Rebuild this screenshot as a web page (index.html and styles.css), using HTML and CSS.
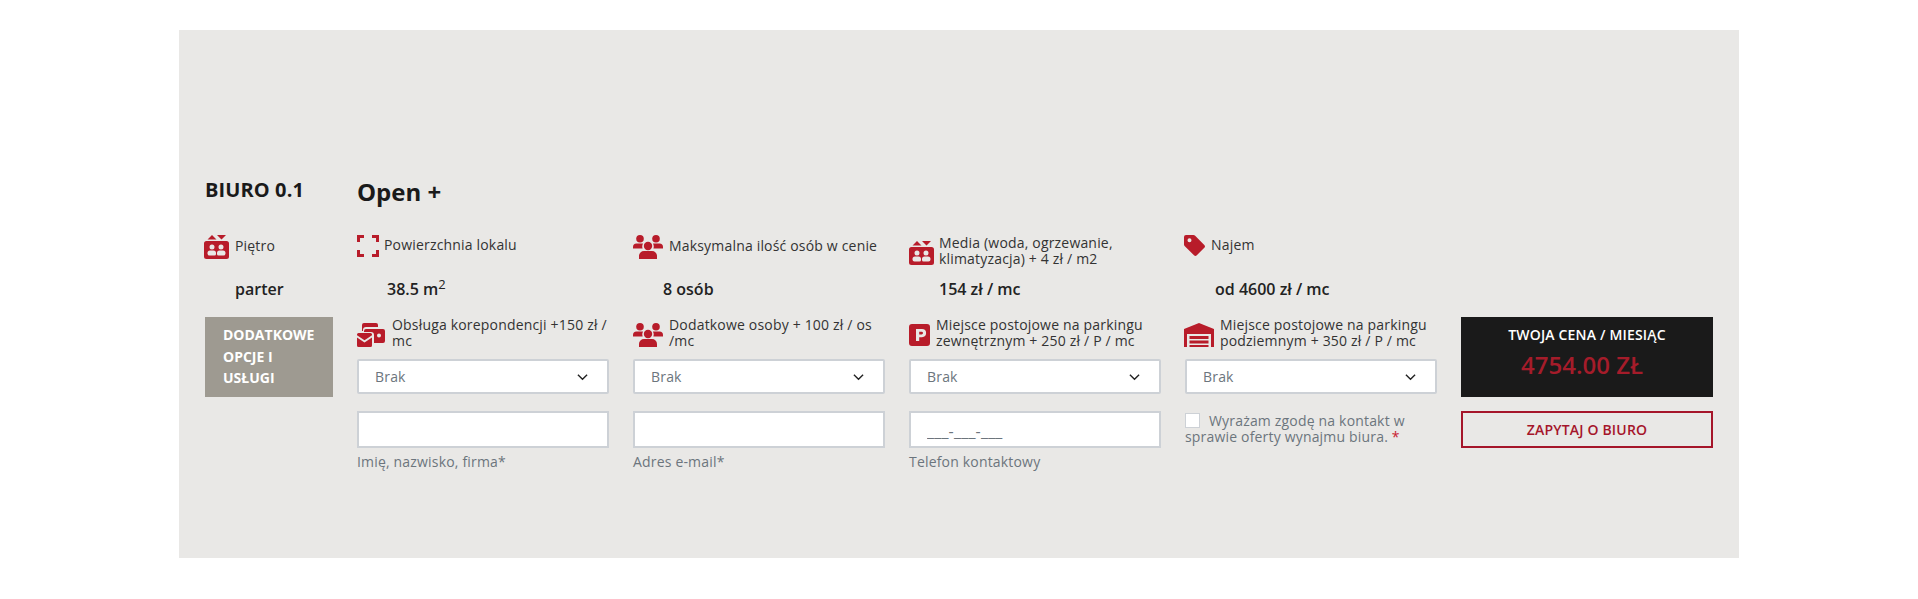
FILE: index.html
```html
<!DOCTYPE html>
<html lang="pl">
<head>
<meta charset="utf-8">
<title>Biuro 0.1</title>
<link rel="stylesheet" href="styles.css">
</head>
<body>
<section class="panel">
  <div class="row row-title">
    <h2 class="office">BIURO 0.1</h2>
    <h1 class="plan">Open +</h1>
  </div>
  <div class="row row-info">
    <div class="head"><svg class="ic w25" viewBox="0 0 25 24"><use href="#lift"/></svg><span class="one t-left">Piętro</span></div>
    <div class="head"><svg class="ic w22" viewBox="0 0 22 22"><path d="M0 0h7v3H3v4H0zM15 0h7v7h-3V3h-4zM0 15h3v4h4v3H0zM19 15h3v7h-7v-3h4z"/></svg><span class="one t-exp">Powierzchnia lokalu</span></div>
    <div class="head"><svg class="ic w30" viewBox="0 0 30 24"><use href="#people"/></svg><span class="one t-ppl">Maksymalna ilość osób w cenie</span></div>
    <div class="head"><svg class="ic w25" viewBox="0 0 25 24"><use href="#lift"/></svg><span class="t-media">Media (woda, ogrzewanie, klimatyzacja) + 4 zł / m2</span></div>
    <div class="head"><svg class="ic w21" viewBox="0 0 21 21"><path d="M2 0h7.500a2 2 0 0 1 1.400.6l9.400 9.400a2 2 0 0 1 0 2.800l-7.500 7.500a2 2 0 0 1-2.800 0L.6 10.900A2 2 0 0 1 0 9.500V2a2 2 0 0 1 2-2zm3.500 3.200a2 2 0 1 0 0 4 2 2 0 0 0 0-4z"/></svg><span class="one t-tag">Najem</span></div>
  </div>
  <div class="row row-values">
    <div class="value">parter</div>
    <div class="value">38.5 m<sup>2</sup></div>
    <div class="value">8 osób</div>
    <div class="value">154 zł / mc</div>
    <div class="value">od 4600 zł / mc</div>
  </div>
  <div class="row row-options">
    <div class="extras">DODATKOWE OPCJE I USŁUGI</div>
    <div class="option">
      <div class="head"><svg class="ic w28" viewBox="0 0 28 24"><path d="M5 5V2a2 2 0 0 1 2-2h12a2 2 0 0 1 2 2v2H9a3 3 0 0 0-3 3v1H5z"/><path d="M9 6h17a2 2 0 0 1 2 2v10a2 2 0 0 1-2 2H17v-8a3 3 0 0 0-3-3H7V8a2 2 0 0 1 2-2zm13 4.500a2 2 0 1 0 0 4 2 2 0 0 0 0-4z"/><path d="M0 11.500A1.500 1.500 0 0 1 1.500 10h12a1.500 1.500 0 0 1 1.500 1.500v.7l-7.500 5-7.500-5zM0 14.500l7.500 5 7.500-5v8a1.500 1.500 0 0 1-1.500 1.500h-12A1.500 1.500 0 0 1 0 22.500z"/></svg><span class="t-mail">Obsługa korepondencji +150 zł / mc</span></div>
      <div class="select">Brak<svg class="chev" viewBox="0 0 12 8"><path d="M1 1.500l5 5 5-5"/></svg></div>
    </div>
    <div class="option">
      <div class="head"><svg class="ic w30" viewBox="0 0 30 24"><use href="#people"/></svg><span class="t-ppl">Dodatkowe osoby + 100 zł / os /mc</span></div>
      <div class="select">Brak<svg class="chev" viewBox="0 0 12 8"><path d="M1 1.500l5 5 5-5"/></svg></div>
    </div>
    <div class="option">
      <div class="head"><svg class="ic w21" viewBox="0 0 21 22"><path fill-rule="evenodd" d="M3 0h15a3 3 0 0 1 3 3v16a3 3 0 0 1-3 3H3a3 3 0 0 1-3-3V3a3 3 0 0 1 3-3zm4 5v12h3.200v-3.800H13a4.100 4.100 0 0 0 0-8.200zm3.200 2.700h2.400a1.400 1.400 0 0 1 0 2.800h-2.400z"/></svg><span class="t-park">Miejsce postojowe na parkingu zewnętrznym + 250 zł / P / mc</span></div>
      <div class="select">Brak<svg class="chev" viewBox="0 0 12 8"><path d="M1 1.500l5 5 5-5"/></svg></div>
    </div>
    <div class="option">
      <div class="head shift"><svg class="ic w30" viewBox="0 0 30 24"><path fill-rule="evenodd" d="M15 0l15 6v18h-3V11H3v13H0V6z"/><path d="M5.500 13h19v3h-19zM5.500 17.500h19v3h-19zM5.500 22h19v2h-19z"/></svg><span class="t-gar">Miejsce postojowe na parkingu podziemnym + 350 zł / P / mc</span></div>
      <div class="select">Brak<svg class="chev" viewBox="0 0 12 8"><path d="M1 1.500l5 5 5-5"/></svg></div>
    </div>
    <div class="price">
      <div class="price-label">TWOJA CENA / MIESIĄC</div>
      <div class="price-value">4754.00 ZŁ</div>
    </div>
  </div>
  <div class="row row-form">
    <div></div>
    <label class="field"><input class="input" type="text"><span class="hint">Imię, nazwisko, firma*</span></label>
    <label class="field"><input class="input" type="text"><span class="hint">Adres e-mail*</span></label>
    <label class="field"><input class="input input-phone" type="text" value="___-___-___"><span class="hint">Telefon kontaktowy</span></label>
    <label class="consent"><input class="check" type="checkbox">Wyrażam zgodę na kontakt w sprawie oferty wynajmu biura. <span class="req">*</span></label>
    <button class="ask" type="button">ZAPYTAJ O BIURO</button>
  </div>
</section>
<svg class="defs" width="0" height="0">
  <defs>
    <g id="lift">
      <path d="M3.500 4.500L8 0l4.500 4.500zM13 0h9l-4.500 4.500z"/>
      <path fill-rule="evenodd" d="M2.500 6h20A2.500 2.500 0 0 1 25 8.500v13a2.500 2.500 0 0 1-2.500 2.500h-20A2.500 2.500 0 0 1 0 21.500v-13A2.500 2.500 0 0 1 2.500 6zM8 9.500a2.500 2.500 0 1 0 0 5 2.500 2.500 0 0 0 0-5zm9 0a2.500 2.500 0 1 0 0 5 2.500 2.500 0 0 0 0-5zM6 15.500a2.500 2.500 0 0 0-2.500 2.500v.5A2 2 0 0 0 5.500 20.500h5a1.500 1.500 0 0 0 1.500-1.500v-1a2.500 2.500 0 0 0-2.500-2.500zm9.500 0A2.500 2.500 0 0 0 13 18v1a1.500 1.500 0 0 0 1.500 1.500h5a2 2 0 0 0 2-2V18a2.500 2.500 0 0 0-2.500-2.500z"/>
    </g>
    <g id="people">
      <circle cx="7" cy="3.800" r="3.800"/><circle cx="23" cy="3.800" r="3.800"/><circle cx="15" cy="11" r="4.200"/>
      <path d="M3.500 8.500h6.500a6 6 0 0 0-.4 5H0v-1.500a3.500 3.500 0 0 1 3.500-3.500zM20 8.500h6.500A3.500 3.500 0 0 1 30 12v1.500h-9.600a6 6 0 0 0-.4-5zM11 16h8a5 5 0 0 1 5 5v3H6v-3a5 5 0 0 1 5-5z"/>
    </g>
  </defs>
</svg>
</body>
</html>
```
FILE: styles.css
```css
* { box-sizing: border-box; }
html, body { margin: 0; padding: 0; background: #fff; }
body { font-family: "Open Sans", "Liberation Sans", sans-serif; font-size: 14px; color: #333; }
.defs { position: absolute; }

.panel {
  width: 1560px;
  height: 528px;
  margin: 30px 0 41px 179px;
  padding: 140px 26px 0;
  background: #e9e8e6;
}
.row {
  display: grid;
  grid-template-columns: 128px repeat(5, 252px);
  column-gap: 24px;
}
.row-title { height: 65px; align-items: start; }
.office { margin: 0; font-size: 20px; font-weight: 700; line-height: 40px; color: #1a1a1a; letter-spacing: .1px; }
.plan { margin: 2px 0 0; font-size: 24px; font-weight: 700; line-height: 40px; color: #1a1a1a; }

.row-info { height: 42px; align-items: start; }
.head { display: flex; align-items: center; line-height: 16px; }
.head span { margin-bottom: 4px; letter-spacing: .18px; }
.head .one { margin-bottom: 2px; }
.ic { flex: none; fill: #b81c2a; height: 24px; }
.w25 { width: 25px; }
.w22 { width: 22px; height: 22px; }
.w30 { width: 30px; }
.w21 { width: 21px; height: 21px; }
.w28 { width: 28px; }
.t-left { margin-left: 6px; }
.t-media { margin-left: 5px; }
.t-exp { margin-left: 5px; }
.t-ppl { margin-left: 6px; }
.t-tag { margin-left: 6px; }
.t-mail { margin-left: 7px; }
.t-park { margin-left: 6px; }
.t-gar { margin-left: 6px; }
.row-info .head:first-child { margin-left: -1px; }
.row-info .head:last-child { margin-left: -1px; }

.row-values { height: 40px; align-items: start; }
.value { padding-left: 30px; font-size: 16px; font-weight: 600; line-height: 24px; color: #222; }
.value sup { font-size: 13px; font-weight: 400; line-height: 0; vertical-align: 6px; }

.row-options { height: 80px; align-items: start; }
.extras {
  height: 80px;
  padding: 7px 17px 7px 18px;
  background: #9e9a91;
  color: #fff;
  font-size: 14px;
  font-weight: 700;
  line-height: 21.500px;
}
.option .head { height: 36px; align-items: center; margin-bottom: 6px; }
.option .head .ic.w21 { height: 22px; }
.option .shift { margin-left: -1px; }
.select {
  display: flex;
  align-items: center;
  justify-content: space-between;
  height: 35px;
  padding: 0 19px 0 16px;
  background: #fff;
  border: 2px solid #cdd1d6;
  border-radius: 2px;
  color: #6c757d;
  letter-spacing: .18px;
}
.chev { width: 11px; height: 8px; fill: none; stroke: #222; stroke-width: 1.500; }
.price {
  height: 80px;
  padding-top: 7px;
  background: #1a1a1a;
  text-align: center;
}
.price-label { color: #fff; font-weight: 600; font-size: 14px; line-height: 22px; letter-spacing: .18px; }
.price-value { padding: 1px 10px 0 0; color: #a51c2a; font-weight: 600; font-size: 24px; line-height: 36px; }

.row-form { margin-top: 14px; align-items: start; }
.field { display: block; }
.input {
  display: block;
  width: 100%;
  height: 37px;
  padding: 3px 16px 0;
  background: #fff;
  border: 2px solid #cdd1d6;
  border-radius: 0;
  font: 14px/20px "Open Sans", "Liberation Sans", sans-serif;
  color: #6c757d;
  outline: 0;
}
.input-phone { font-size: 16px; letter-spacing: .2px; }
.hint { display: block; margin-top: 4px; line-height: 20px; color: #6c757d; letter-spacing: .18px; }
.consent { display: block; line-height: 16px; color: #6c757d; padding-top: 2px; letter-spacing: .18px; }
.check {
  appearance: none;
  width: 15px;
  height: 15px;
  margin: 0 9px 0 0;
  vertical-align: -2px;
  background: #fff;
  border: 1px solid #cdd1d6;
}
.req { color: #c8202f; }
.ask {
  height: 37px;
  padding: 0;
  background: transparent;
  border: 2px solid #a5152a;
  color: #a5152a;
  font: 600 14px "Open Sans", "Liberation Sans", sans-serif;
  letter-spacing: .18px;
}
```
